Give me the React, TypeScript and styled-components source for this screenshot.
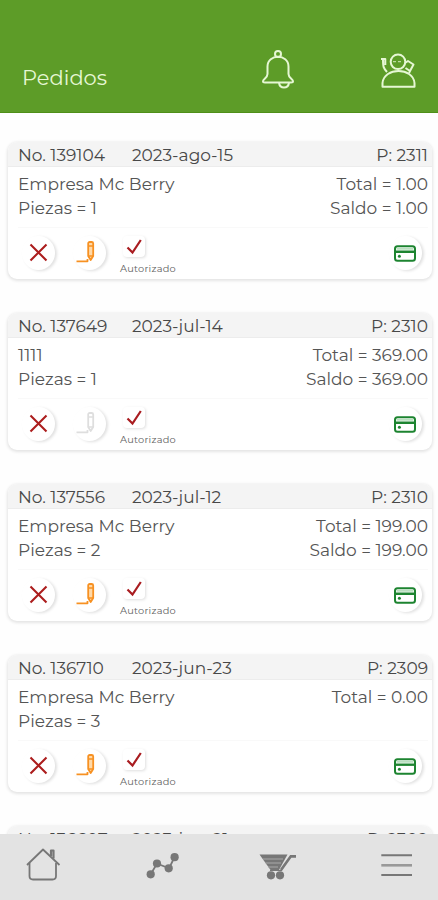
import React from "react";
import styled, { createGlobalStyle } from "styled-components";

const GlobalStyle = createGlobalStyle`
  * { box-sizing: border-box; }
  html, body { margin: 0; padding: 0; background: #fefefe; overflow: hidden; }
  body { font-family: "Montserrat", "Inter", sans-serif; color: #484848; }
  svg { display: block; }
`;

const Screen = styled.main`
  display: flex;
  flex-direction: column;
  width: 438px;
  height: 900px;
  overflow: hidden;
`;

const TopBar = styled.header`
  flex: none;
  display: flex;
  align-items: flex-start;
  height: 113px;
  padding: 48px 22px 0 23px;
  background: #5d9c28;
  border-bottom: 1px solid #4f8f18;
  color: #e6f7d4;
`;

const Title = styled.h1`
  flex: 1;
  margin: 16px 0 0 -1px;
  font-size: 21px;
  line-height: 27px;
  font-weight: 400;
`;

const TopIcon = styled.button`
  width: 36px;
  height: 44px;
  margin-left: 84px;
  padding: 0;
  border: 0;
  background: none;
  color: #e6f7d4;
`;

const List = styled.section`
  flex: 1;
  min-height: 0;
  display: flex;
  flex-direction: column;
  gap: 34px;
  padding: 29px 6px 0 8px;
  overflow: hidden;
`;

const Card = styled.article`
  flex: none;
  height: 137px;
  border-radius: 9px;
  background: #fff;
  box-shadow: 0 1px 3px 1px rgba(0, 0, 0, 0.1);
  overflow: hidden;
`;

const CardHead = styled.div`
  display: grid;
  grid-template-columns: 114px 1fr auto;
  height: 25px;
  padding: 0 4px 0 10px;
  background: #f4f4f4;
  border-bottom: 1px solid #ececec;
  font-size: 17px;
  line-height: 26px;
  white-space: nowrap;
`;

const Details = styled.div`
  display: grid;
  grid-template-columns: 1fr auto;
  height: 61px;
  margin: 0 4px 0 10px;
  padding-top: 5px;
  border-bottom: 1px solid #f9f9f9;
  font-size: 17px;
  line-height: 24px;
  color: #555;
`;

const Column = styled.div<{ $end?: boolean }>`
  display: flex;
  flex-direction: column;
  align-items: ${({ $end }) => ($end ? "flex-end" : "flex-start")};
`;

const Actions = styled.div`
  display: flex;
  align-items: flex-start;
  padding: 8px 10px 0 14px;
`;

const RoundButton = styled.button<{ $gap?: number }>`
  display: flex;
  align-items: center;
  justify-content: center;
  width: 33px;
  height: 34px;
  margin-right: ${({ $gap = 0 }) => $gap}px;
  padding: 0;
  border: 0;
  border-radius: 50%;
  background: #fff;
  box-shadow: 2px 1px 3px rgba(0, 0, 0, 0.12);
`;

const Status = styled.div`
  flex: 1;
  display: flex;
  flex-direction: column;
  align-items: flex-start;
`;

const StatusBox = styled.span`
  display: flex;
  align-items: center;
  justify-content: center;
  width: 22px;
  height: 21px;
  margin-left: 3px;
  border-radius: 4px;
  background: #fff;
  box-shadow: 1px 1px 3px rgba(0, 0, 0, 0.13);
`;

const StatusLabel = styled.span`
  margin-top: 5px;
  font-size: 9.8px;
  line-height: 13px;
  letter-spacing: 0.25px;
  color: #626262;
`;

const TabBar = styled.nav`
  flex: none;
  display: flex;
  justify-content: space-between;
  height: 66px;
  padding: 11px 22px 0 23px;
  background: #e3e3e3;
`;

const Tab = styled.button`
  width: 40px;
  height: 40px;
  padding: 0;
  border: 0;
  background: none;
  color: #777;
`;

const Bell = () => (
  <svg width="36" height="44" viewBox="0 0 36 44" fill="none" stroke="currentColor" strokeWidth="2" strokeLinejoin="round">
    <circle cx="18" cy="6" r="3" />
    <path d="M7.5 18.5C7.5 5.5 28.5 5.5 28.5 18.5V26C28.5 30 33 31 33 33.2Q33 34.4 31 34.4H5Q3 34.4 3 33.2C3 31 7.5 30 7.5 26Z" />
    <path d="M19 35C20 41 28 41 29 35" />
  </svg>
);

const Profile = () => (
  <svg width="36" height="44" viewBox="0 0 36 44" fill="none" stroke="currentColor" strokeWidth="2" strokeLinejoin="round">
    <circle cx="18" cy="13.8" r="7.3" />
    <path d="M2.5 38.7V35C4 19 33 19 34.5 35V38.7Z" />
    <path d="M1 11H5.3V17M3 11.5C3 19 3.5 20 7 24" />
    <path d="M25 15L28 13L33.5 16.5L30 23L25.5 20M30 23L29 25" />
    <path d="M13 13.7H16M18 13.7H21" strokeWidth="1.3" opacity=".7" />
  </svg>
);

const Cross = () => (
  <svg width="20" height="20" viewBox="0 0 20 20" fill="none" stroke="#ac1d1d" strokeWidth="2.1">
    <path d="M1.5 1.5L17.5 17.5M17.5 1.5L1.5 17.5" />
  </svg>
);

const Pencil = ({ muted }: { muted?: boolean }) => (
  <svg width="28" height="24" viewBox="0 0 28 24" fill="none" stroke={muted ? "#dedede" : "#f79122"} strokeWidth="1.8" strokeLinejoin="round">
    <path d="M12.2 2.5Q12.2 1 13.8 1H15.6Q17.2 1 17.2 2.5V15L14.7 19L12.2 15Z" fill={muted ? "none" : "#ffd9a8"} />
    <path d="M12.2 5H17.2M12.2 15H17.2" strokeWidth="1.4" />
    <path d="M0.5 20.3H11.5V18" />
  </svg>
);

const Check = () => (
  <svg width="18" height="18" viewBox="0 0 18 18" fill="none" stroke="#a91c20" strokeWidth="2.2">
    <path d="M2.5 9.5L7.5 14.5L15.8 2" />
  </svg>
);

const CreditCard = () => (
  <svg width="24" height="17" viewBox="0 0 24 17" fill="none" stroke="#1d8430" strokeWidth="2">
    <rect x="1" y="1.2" width="20" height="14.6" rx="2.5" />
    <path d="M1 6.7H21" strokeWidth="2.4" />
    <path d="M2.5 3.7H19.5" stroke="#b9dfbf" strokeWidth="2" />
    <circle cx="5.4" cy="11.2" r="1.5" fill="#1d8430" stroke="none" />
  </svg>
);

const Home = () => (
  <svg width="40" height="40" viewBox="0 0 40 40" fill="none" stroke="currentColor" strokeWidth="1.8" strokeLinejoin="round">
    <path d="M4 20L20 4.5L36.5 20" />
    <path d="M6.5 18V31Q6.5 34.5 10 34.5H29.5Q33 34.5 33 31V18" />
    <path d="M28 11V5.5H30.5V13.5" strokeWidth="2.2" />
  </svg>
);

const Chart = () => (
  <svg width="40" height="40" viewBox="0 0 40 40" fill="currentColor">
    <path d="M9.7 29.3L16 18.5L28 23.3L33.6 12" fill="none" stroke="currentColor" strokeWidth="1.8" />
    <circle cx="9.7" cy="29.3" r="4.1" />
    <circle cx="16" cy="18.5" r="4.1" />
    <circle cx="27.7" cy="23.3" r="4.1" />
    <circle cx="33.6" cy="12.2" r="4.1" />
  </svg>
);

const Cart = () => (
  <svg width="40" height="40" viewBox="0 0 40 40" fill="currentColor">
    <path d="M1.5 9.5H29.5L21 25H12.5Z" />
    <path d="M5 14H25M7.5 18H23M10 22H20" stroke="#aaa" strokeWidth="1" />
    <path d="M23 25L32.8 11.3H38" fill="none" stroke="currentColor" strokeWidth="2.7" />
    <path d="M12 25H24V26H12Z" />
    <circle cx="13" cy="30.3" r="4.1" />
    <circle cx="22" cy="30.3" r="4.1" />
  </svg>
);

const Menu = () => (
  <svg width="40" height="40" viewBox="0 0 40 40" fill="none" stroke="currentColor" strokeWidth="2">
    <path d="M5.3 10.3H36M5.3 30H36" />
    <path d="M5.3 20.3H36" stroke="#999" strokeWidth="2.6" />
  </svg>
);

type Order = {
  no: string;
  date: string;
  period: string;
  client: string;
  pieces: number;
  total: string;
  balance?: string;
  locked?: boolean;
};

const orders: Order[] = [
  { no: "139104", date: "2023-ago-15", period: "2311", client: "Empresa Mc Berry", pieces: 1, total: "1.00", balance: "1.00" },
  { no: "137649", date: "2023-jul-14", period: "2310", client: "1111", pieces: 1, total: "369.00", balance: "369.00", locked: true },
  { no: "137556", date: "2023-jul-12", period: "2310", client: "Empresa Mc Berry", pieces: 2, total: "199.00", balance: "199.00" },
  { no: "136710", date: "2023-jun-23", period: "2309", client: "Empresa Mc Berry", pieces: 3, total: "0.00" },
  { no: "136607", date: "2023-jun-21", period: "2309", client: "Empresa Mc Berry", pieces: 1, total: "0.00" },
];

const OrderCard = ({ order }: { order: Order }) => (
  <Card>
    <CardHead>
      <span>No. {order.no}</span>
      <span>{order.date}</span>
      <span>P: {order.period}</span>
    </CardHead>
    <Details>
      <Column>
        <span>{order.client}</span>
        <span>Piezas = {order.pieces}</span>
      </Column>
      <Column $end>
        <span>Total = {order.total}</span>
        {order.balance && <span>Saldo = {order.balance}</span>}
      </Column>
    </Details>
    <Actions>
      <RoundButton $gap={18} aria-label="Cancelar"><Cross /></RoundButton>
      <RoundButton $gap={14} aria-label="Editar"><Pencil muted={order.locked} /></RoundButton>
      <Status>
        <StatusBox><Check /></StatusBox>
        <StatusLabel>Autorizado</StatusLabel>
      </Status>
      <RoundButton aria-label="Pagar"><CreditCard /></RoundButton>
    </Actions>
  </Card>
);

export default function App() {
  return (
    <>
      <GlobalStyle />
      <Screen>
        <TopBar>
          <Title>Pedidos</Title>
          <TopIcon aria-label="Notificaciones"><Bell /></TopIcon>
          <TopIcon aria-label="Perfil"><Profile /></TopIcon>
        </TopBar>
        <List>
          {orders.map((order) => <OrderCard key={order.no} order={order} />)}
        </List>
        <TabBar>
          <Tab aria-label="Inicio"><Home /></Tab>
          <Tab aria-label="Estadísticas"><Chart /></Tab>
          <Tab aria-label="Carrito"><Cart /></Tab>
          <Tab aria-label="Menú"><Menu /></Tab>
        </TabBar>
      </Screen>
    </>
  );
}
